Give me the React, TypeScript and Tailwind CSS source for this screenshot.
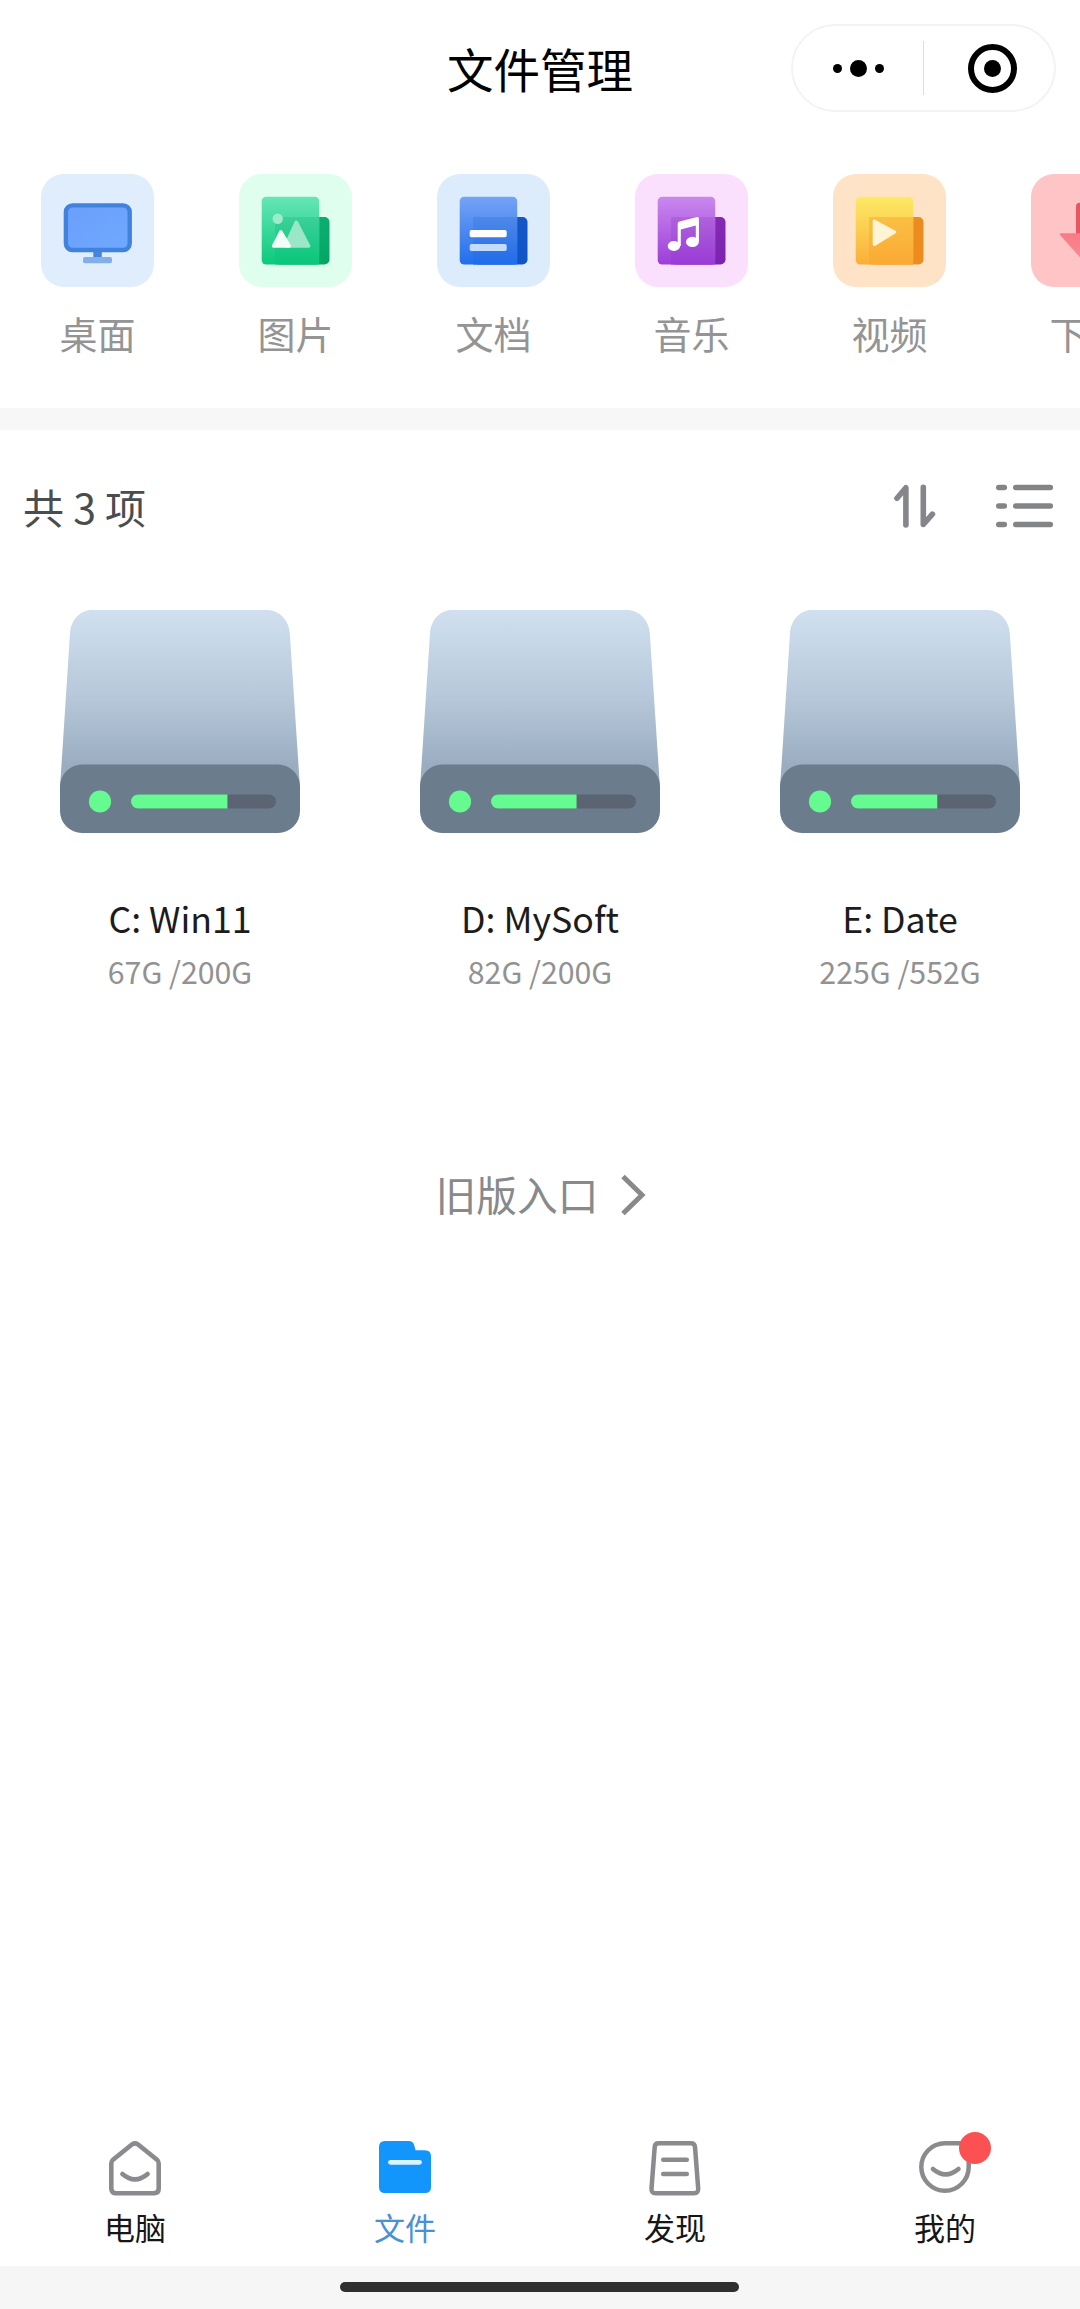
import type { ReactNode } from 'react';

interface Category {
  label: string;
  tile: string;
  icon: ReactNode;
}

interface Drive {
  name: string;
  usage: string;
  free: number;
}

interface TabItem {
  label: string;
  icon: ReactNode;
  active?: boolean;
  badge?: boolean;
}

interface FolderColors {
  top: string;
  bottom: string;
  innerTop: string;
  innerBottom: string;
  edgeTop: string;
  edgeBottom: string;
}

function FolderIcon({ id, colors, children }: { id: string; colors: FolderColors; children: ReactNode }) {
  return (
    <svg viewBox="0 0 113 113" className="h-full w-full">
      <defs>
        <linearGradient id={`${id}-front`} x1="0" y1="0" x2="0" y2="1">
          <stop offset="0" stopColor={colors.top} />
          <stop offset="1" stopColor={colors.bottom} />
        </linearGradient>
        <linearGradient id={`${id}-inner`} x1="0" y1="0" x2="0" y2="1">
          <stop offset="0" stopColor={colors.innerTop} />
          <stop offset="1" stopColor={colors.innerBottom} />
        </linearGradient>
        <linearGradient id={`${id}-edge`} x1="0" y1="0" x2="0" y2="1">
          <stop offset="0" stopColor={colors.edgeTop} />
          <stop offset="1" stopColor={colors.edgeBottom} />
        </linearGradient>
      </defs>
      <rect x="36" y="43" width="54.5" height="47.5" rx="5" fill={`url(#${id}-edge)`} />
      <rect x="22.7" y="22.7" width="57.5" height="67.8" rx="4.5" fill={`url(#${id}-front)`} />
      <rect x="36" y="43" width="44.2" height="47.5" fill={`url(#${id}-inner)`} />
      {children}
    </svg>
  );
}

function DesktopIcon() {
  return (
    <svg viewBox="0 0 113 113" className="h-full w-full">
      <defs>
        <linearGradient id="screen" x1="0" y1="0" x2="1" y2="1">
          <stop offset="0" stopColor="#6a9ffb" />
          <stop offset="1" stopColor="#70a8ff" />
        </linearGradient>
      </defs>
      <rect x="52.3" y="76" width="8.5" height="8" fill="#4784dc" />
      <rect x="42" y="83" width="29" height="6.2" rx="2" fill="#82aeea" />
      <rect x="24.9" y="31.4" width="63.8" height="44.6" rx="6.5" fill="url(#screen)" stroke="#3f83df" strokeWidth="4.4" />
    </svg>
  );
}

const categories: Category[] = [
  { label: '桌面', tile: 'bg-[#dfedfd]', icon: <DesktopIcon /> },
  {
    label: '图片',
    tile: 'bg-[#dffeed]',
    icon: (
      <FolderIcon
        id="picture"
        colors={{
          top: '#66e6b6',
          bottom: '#0bc97d',
          innerTop: '#3bd09a',
          innerBottom: '#08c77b',
          edgeTop: '#0cae70',
          edgeBottom: '#06a566',
        }}
      >
        <circle cx="38.7" cy="44.7" r="5.2" fill="#9cecca" />
        <path
          d="M57.3 48.3 69.6 72H46.5Z"
          fill="#9be6c6"
          stroke="#9be6c6"
          strokeWidth="3.6"
          strokeLinejoin="round"
        />
        <path d="M41.8 58 50.2 72H34.6Z" fill="#f1fdf6" stroke="#f1fdf6" strokeWidth="3.6" strokeLinejoin="round" />
      </FolderIcon>
    ),
  },
  {
    label: '文档',
    tile: 'bg-[#dcecfc]',
    icon: (
      <FolderIcon
        id="document"
        colors={{
          top: '#76a3f6',
          bottom: '#216eec',
          innerTop: '#4f88e8',
          innerBottom: '#1f6cea',
          edgeTop: '#1556c6',
          edgeBottom: '#0f54c6',
        }}
      >
        <rect x="32.7" y="56" width="37" height="7.3" rx="1.8" fill="#fff" />
        <rect x="32.7" y="70" width="37" height="7" rx="1.8" fill="#c3dcfc" />
      </FolderIcon>
    ),
  },
  {
    label: '音乐',
    tile: 'bg-[#fae0fd]',
    icon: (
      <FolderIcon
        id="music"
        colors={{
          top: '#c988ee',
          bottom: '#9c3ed8',
          innerTop: '#ae63dc',
          innerBottom: '#9a3ad6',
          edgeTop: '#8429b4',
          edgeBottom: '#7c24ae',
        }}
      >
        <path
          d="M42.7 49.8q0-1.9 1.9-2.4L62 43q1.9-.4 1.9 1.6V67.5h-3.1V51.4L45.8 55.6V72h-3.1Z"
          fill="#fff"
        />
        <ellipse cx="38.9" cy="72" rx="6.2" ry="5.1" fill="#fff" />
        <ellipse cx="57.4" cy="67.9" rx="6.4" ry="5.2" fill="#fff" />
      </FolderIcon>
    ),
  },
  {
    label: '视频',
    tile: 'bg-[#fee3c7]',
    icon: (
      <FolderIcon
        id="video"
        colors={{
          top: '#fdea66',
          bottom: '#fbae38',
          innerTop: '#fac043',
          innerBottom: '#faa934',
          edgeTop: '#ea8c20',
          edgeBottom: '#ee8c1c',
        }}
      >
        <path
          d="M41.2 47v23.6L61.8 58Z"
          fill="#fff4d4"
          stroke="#fff4d4"
          strokeWidth="3"
          strokeLinejoin="round"
        />
      </FolderIcon>
    ),
  },
  {
    label: '下载',
    tile: 'bg-[#fec4c6]',
    icon: (
      <svg viewBox="0 0 113 113" className="h-full w-full">
        <defs>
          <linearGradient id="arrow" x1="0" y1="0" x2="0" y2="1">
            <stop offset="0" stopColor="#f77a88" />
            <stop offset="1" stopColor="#fb8d98" />
          </linearGradient>
        </defs>
        <rect x="45" y="28.7" width="23" height="40" rx="3.5" fill="#e6575f" />
        <path d="M30.5 59.3h52q2.5.3 1 2.3L58 90q-1.5 1.5-3 0L29.5 61.6q-1.5-2 1-2.3Z" fill="url(#arrow)" />
      </svg>
    ),
  },
];

const drives: Drive[] = [
  { name: 'C: Win11', usage: '67G /200G', free: 0.665 },
  { name: 'D: MySoft', usage: '82G /200G', free: 0.59 },
  { name: 'E: Date', usage: '225G /552G', free: 0.595 },
];

const tabs: TabItem[] = [
  {
    label: '电脑',
    icon: (
      <g fill="none" stroke="#8b8b8f" strokeWidth="4.6" strokeLinecap="round" strokeLinejoin="round">
        <path d="M4.3 22.4Q4.3 20.2 6 18.8L25.2 3.3Q28 1.4 30.8 3.3L50 18.8Q51.7 20.2 51.7 22.4V47.6Q51.7 52.3 47 52.3H9Q4.3 52.3 4.3 47.6Z" />
        <path d="M15.4 33Q28 43.8 40.6 33" />
      </g>
    ),
  },
  {
    label: '文件',
    active: true,
    icon: (
      <g>
        <path
          d="M8 0H31.5Q36 0 37.2 4.2L38.6 9.3H48Q54 9.3 54 15.3V46Q54 52 48 52H8Q2 52 2 46V6Q2 0 8 0Z"
          fill="#1296fb"
        />
        <path d="M13.5 21.3H42.5" stroke="#d9f3ff" strokeWidth="4.8" strokeLinecap="round" />
      </g>
    ),
  },
  {
    label: '发现',
    icon: (
      <g fill="none" stroke="#8b8b8f" strokeWidth="4.5" strokeLinecap="round" strokeLinejoin="round">
        <path d="M11.5 2.3H44Q47.6 2.3 48 6L51.2 47.5Q51.5 52.3 47 52.3H8.6Q4.2 52.3 4.5 47.5L7.7 6Q8 2.3 11.5 2.3Z" />
        <path d="M16.2 18.7H39.8M16.2 33H39.8" />
      </g>
    ),
  },
  {
    label: '我的',
    badge: true,
    icon: (
      <g fill="none" stroke="#8b8b8f" strokeWidth="4.5" strokeLinecap="round">
        <path d="M44 2.3H28A23.7 23.7 0 1 0 51.7 26V12" />
        <path d="M15.9 28Q28.7 38.8 41.5 28" />
      </g>
    ),
  },
];

function CapsuleMenu() {
  return (
    <div className="flex h-[88px] w-[265px] items-center rounded-full border-2 border-[#f3f3f3]">
      <div className="flex w-[130px] items-center justify-center gap-2">
        <span className="h-[9px] w-[9px] rounded-full bg-black" />
        <span className="h-[17px] w-[17px] rounded-full bg-black" />
        <span className="h-[9px] w-[9px] rounded-full bg-black" />
      </div>
      <span className="h-[54px] w-px bg-[#dedede]" />
      <div className="flex flex-1 justify-center pl-[6px]">
        <span className="grid h-[49px] w-[49px] place-items-center rounded-full border-[6px] border-black">
          <span className="h-[17px] w-[17px] rounded-full bg-black" />
        </span>
      </div>
    </div>
  );
}

function DriveIcon({ id, free }: { id: string; free: number }) {
  return (
    <svg viewBox="0 0 240 223" className="h-[223px] w-[240px]">
      <defs>
        <linearGradient id={`${id}-body`} x1="0" y1="0" x2="0" y2="1">
          <stop offset="0" stopColor="#d0e0ef" />
          <stop offset="0.5" stopColor="#b5c7d9" />
          <stop offset="0.88" stopColor="#9aadc0" />
          <stop offset="1" stopColor="#9aadc0" />
        </linearGradient>
        <clipPath id={`${id}-track`}>
          <rect x="71" y="184.5" width="145" height="14" rx="7" />
        </clipPath>
      </defs>
      <path d="M32 0H207C219 0 229 10 229.8 23L240 178H0L10 23C11 10 20 0 32 0Z" fill={`url(#${id}-body)`} />
      <rect y="154.5" width="240" height="68.5" rx="22" fill="#6b7c8d" />
      <circle cx="40" cy="191.5" r="11.1" fill="#65fb90" />
      <g clipPath={`url(#${id}-track)`}>
        <rect x="71" y="184" width="145" height="15" fill="#5a6473" />
        <rect x="71" y="184" width={145 * free} height="15" fill="#65fb90" />
      </g>
    </svg>
  );
}

export default function App() {
  return (
    <div className="flex h-[2309px] w-[1080px] flex-col overflow-hidden bg-white font-['Noto_Sans_CJK_SC',sans-serif]">
      <header className="grid h-[136px] flex-none grid-cols-[1fr_auto_1fr] items-center pr-6">
        <span />
        <h1 className="pl-6 text-[46.5px] leading-none text-black">文件管理</h1>
        <div className="flex justify-end">
          <CapsuleMenu />
        </div>
      </header>

      <nav className="flex h-[272px] flex-none gap-[85px] overflow-hidden pt-[38px] pl-[41px]">
        {categories.map(item => (
          <div key={item.label} className="flex w-[113px] flex-none flex-col items-center">
            <div className={`h-[113px] w-[113px] rounded-[23px] ${item.tile}`}>{item.icon}</div>
            <span className="mt-[26px] text-[38px] leading-[40px] whitespace-nowrap text-[#949494]">{item.label}</span>
          </div>
        ))}
      </nav>

      <div className="h-[22px] flex-none bg-[#f7f7f7]" />

      <main className="flex flex-1 flex-col">
        <div className="flex h-[154px] items-center justify-between pr-[26px] pl-[23px]">
          <span className="pb-px text-[41px] leading-none text-[#4a4d50]">共 3 项</span>
          <div className="flex items-center gap-[58px] pb-[3px]">
            <svg
              viewBox="0 0 46 46"
              className="h-[46px] w-[46px]"
              fill="none"
              stroke="#85868b"
              strokeWidth="5.6"
              strokeLinecap="round"
              strokeLinejoin="round"
            >
              <path d="M5 15.3 13.9 4.8V42M31.3 4.2V41.5L40.4 31.2" />
            </svg>
            <svg
              viewBox="0 0 58 46"
              className="h-[46px] w-[58px]"
              stroke="#838486"
              strokeWidth="5.6"
              strokeLinecap="round"
            >
              <path d="M2.8 4.5h5.5M2.8 23h5.5M2.8 41.5h5.5M19.8 4.5h34.5M19.8 23h34.5M19.8 41.5h34.5" />
            </svg>
          </div>
        </div>

        <div className="grid grid-cols-3 pt-[26px]">
          {drives.map(drive => (
            <div key={drive.name} className="flex flex-col items-center">
              <DriveIcon id={drive.name.charAt(0)} free={drive.free} />
              <span className="mt-[60px] text-[35.7px] leading-[50px] text-[#1c1c1c]">{drive.name}</span>
              <span className="text-[30.3px] leading-[56px] text-[#929292]">{drive.usage}</span>
            </div>
          ))}
        </div>

        <button type="button" className="mt-[170px] flex items-center justify-center gap-[22px] pl-[2px] text-[#88898b]">
          <span className="pb-[3px] text-[40.7px] leading-[49px]">旧版入口</span>
          <svg viewBox="0 0 26 42" className="h-[42px] w-[26px]" fill="none" stroke="currentColor" strokeWidth="5">
            <path d="M3 2.5 22 21 3 39.5" />
          </svg>
        </button>
      </main>

      <footer className="grid h-[125px] flex-none grid-cols-4">
        {tabs.map(tab => (
          <div key={tab.label} className="flex flex-col items-center">
            <div className="relative">
              <svg viewBox="0 0 56 56" className="h-[56px] w-[56px]">
                {tab.icon}
              </svg>
              {tab.badge && <span className="absolute -top-[9px] left-[42px] h-[32px] w-[32px] rounded-full bg-[#fb5153]" />}
            </div>
            <span className={`mt-[10px] text-[31px] leading-[40px] ${tab.active ? 'text-[#4a90d4]' : 'text-[#161616]'}`}>
              {tab.label}
            </span>
          </div>
        ))}
      </footer>

      <div className="flex h-[43px] flex-none justify-center bg-[#f6f6f6] pt-[16px] pr-px">
        <span className="h-[10px] w-[399px] rounded-full bg-[#2f2f2f]" />
      </div>
    </div>
  );
}
